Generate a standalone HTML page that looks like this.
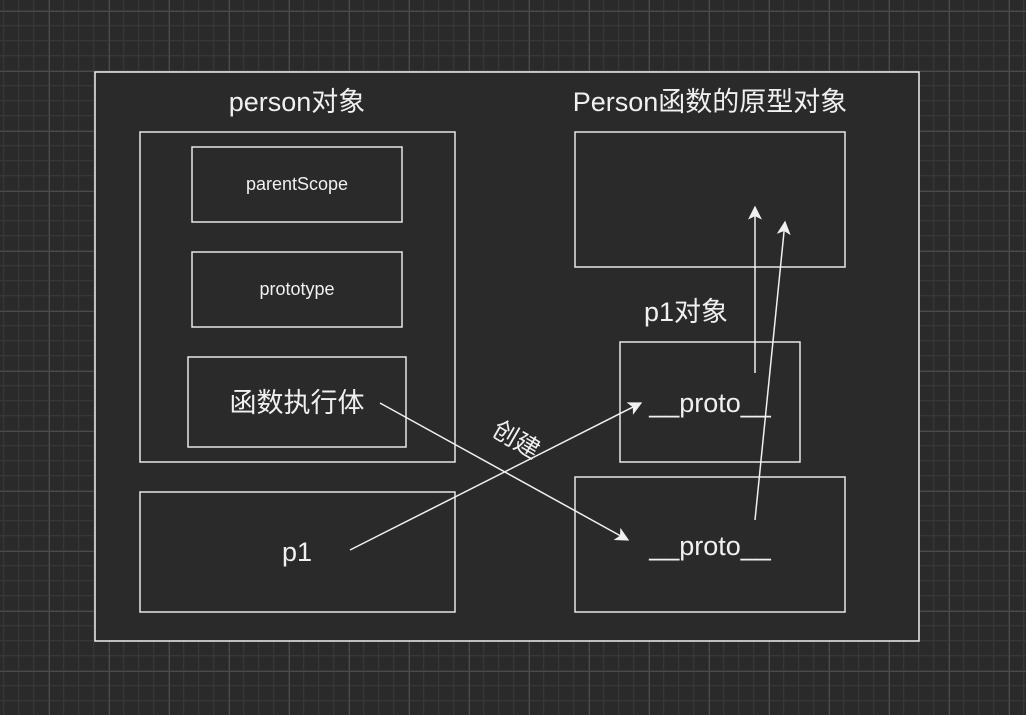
<!DOCTYPE html>
<html><head><meta charset="utf-8"><style>
html,body{margin:0;padding:0;background:#2a2a2a;}
svg{display:block}
text{font-family:"Liberation Sans","Noto Sans CJK SC",sans-serif;fill:#f0f0f0}
</style></head><body>
<svg width="1026" height="715" viewBox="0 0 1026 715" xmlns="http://www.w3.org/2000/svg">
<defs>
<pattern id="minor" x="3" y="10" width="15" height="15" patternUnits="userSpaceOnUse">
<path d="M0 0H15M0 0V15" stroke="#373737" stroke-width="2.5" fill="none"/>
</pattern>
<pattern id="major" x="49" y="11" width="60" height="60" patternUnits="userSpaceOnUse">
<path d="M0 0.5H60M0.5 0V60" stroke="#4a4a4a" stroke-width="1" fill="none"/>
</pattern>
<marker id="ar" viewBox="0 0 10 10" refX="9" refY="5" markerWidth="14" markerHeight="14" markerUnits="userSpaceOnUse" orient="auto">
<path d="M0 0L10 5L0 10L2.5 5Z" fill="#f0f0f0"/>
</marker>
</defs>
<rect width="1026" height="715" fill="#2a2a2a"/>
<rect width="1026" height="715" fill="url(#minor)"/>
<rect width="1026" height="715" fill="url(#major)"/>
<rect x="95" y="72" width="824" height="569" fill="#2a2a2a" stroke="#f0f0f0" stroke-width="1.5"/>
<g fill="none" stroke="#e6e6e6" stroke-width="1.5">
<rect x="140" y="132" width="315" height="330"/>
<rect x="192" y="147" width="210" height="75"/>
<rect x="192" y="252" width="210" height="75"/>
<rect x="188" y="357" width="218" height="90"/>
<rect x="140" y="492" width="315" height="120"/>
<rect x="575" y="132" width="270" height="135"/>
<rect x="620" y="342" width="180" height="120"/>
<rect x="575" y="477" width="270" height="135"/>
</g>
<g stroke="#f0f0f0" stroke-width="1.5" fill="none">
<path d="M380 403L628 540" marker-end="url(#ar)"/>
<path d="M350 550L641 403" marker-end="url(#ar)"/>
<path d="M755 373L755 207" marker-end="url(#ar)"/>
<path d="M755 520L785 222" marker-end="url(#ar)"/>
</g>
<text x="297" y="111" font-size="27" text-anchor="middle">person对象</text>
<text x="710" y="111" font-size="27" text-anchor="middle">Person函数的原型对象</text>
<text x="297" y="190" font-size="18" text-anchor="middle">parentScope</text>
<text x="297" y="295" font-size="18" text-anchor="middle">prototype</text>
<text x="297" y="412" font-size="27" text-anchor="middle">函数执行体</text>
<text x="297" y="561" font-size="27" text-anchor="middle">p1</text>
<text x="686" y="321" font-size="27" text-anchor="middle">p1对象</text>
<text x="710" y="412" font-size="27" text-anchor="middle">__proto__</text>
<text x="710" y="555" font-size="27" text-anchor="middle">__proto__</text>
<text x="0" y="0" font-size="25" text-anchor="middle" transform="translate(512 447) rotate(30)">创建</text>
</svg>
</body></html>
